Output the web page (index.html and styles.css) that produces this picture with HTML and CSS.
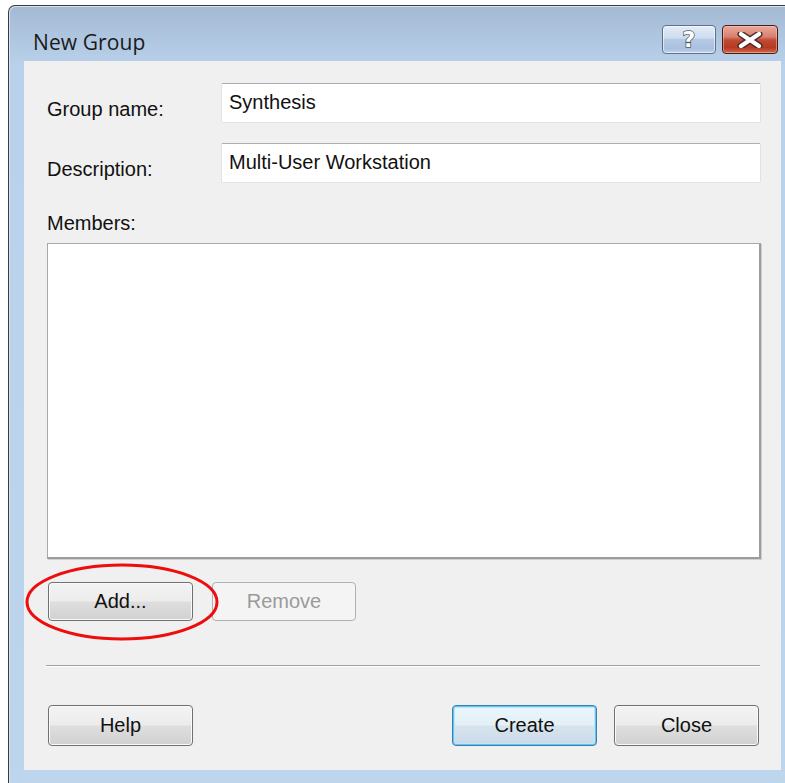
FILE: index.html
```html
<!DOCTYPE html>
<html lang="en">
<head>
<meta charset="utf-8">
<title>New Group</title>
<link rel="stylesheet" href="styles.css">
</head>
<body>
<div class="window">
  <div class="titlebar">
    <span class="title">New Group</span>
    <div class="caption-buttons">
      <div class="cap cap-help"><span class="qmark">?</span></div>
      <div class="cap cap-close">
        <svg width="26" height="16" viewBox="0 0 26 16">
          <path d="M4 2 L22 14 M22 2 L4 14" stroke="#4a2a26" stroke-width="7" stroke-linecap="round"/>
          <path d="M4 2 L22 14 M22 2 L4 14" stroke="#ffffff" stroke-width="4.2" stroke-linecap="round"/>
        </svg>
      </div>
    </div>
  </div>

  <div class="client">
    <div class="field-row">
      <span class="label">Group name:</span>
      <div class="textbox">Synthesis</div>
    </div>
    <div class="field-row second">
      <span class="label">Description:</span>
      <div class="textbox">Multi-User Workstation</div>
    </div>

    <div class="members-label">Members:</div>
    <div class="listbox"></div>

    <div class="member-actions">
      <button class="btn">Add...</button>
      <button class="btn disabled">Remove</button>
      <svg class="ring" width="196" height="80" viewBox="0 0 196 80">
        <ellipse cx="98" cy="39" rx="95" ry="37" fill="none" stroke="#ee0c0c" stroke-width="3"/>
      </svg>
    </div>

    <div class="separator"></div>

    <div class="footer">
      <button class="btn tall">Help</button>
      <div class="footer-right">
        <button class="btn tall default">Create</button>
        <button class="btn tall">Close</button>
      </div>
    </div>
  </div>
</div>
</body>
</html>
```

FILE: styles.css
```css
html, body {
  margin: 0;
  padding: 0;
  overflow: hidden;
  background: #ffffff;
}

body {
  width: 785px;
  height: 783px;
}

/* outer window frame (Aero Basic look) */
.window {
  margin: 5px 0 0 8px;
  width: 800px;
  height: 800px;
  box-sizing: border-box;
  border: 1px solid #3b3b3b;
  border-bottom: none;
  border-radius: 7px 7px 0 0;
  padding: 0 0 0 15px;
  background: linear-gradient(#a3b9d4 0px, #b4cbe5 45px, #b9d1ea 60px, #bdd4ed 760px, #c0d8f0 100%);
  box-shadow: inset 1px 1px 0 #d6e2f0;
}

.titlebar {
  width: 757px;
  height: 55px;
  display: flex;
  align-items: flex-start;
  justify-content: space-between;
}

.title {
  font-family: "Open Sans", "Noto Sans", sans-serif;
  font-size: 21px;
  color: #1a1a1a;
  margin: 22px 0 0 9px;
  line-height: 28px;
  letter-spacing: 0.1px;
}

.caption-buttons {
  display: flex;
  gap: 6px;
  margin: 19px 3px 0 0;
}

.cap {
  height: 27px;
  border-radius: 4px;
  display: flex;
  align-items: center;
  justify-content: center;
}

.cap-help {
  width: 52px;
  border: 1px solid #5f7189;
  background: linear-gradient(#e4edf8 0%, #cddcef 45%, #b4c9e4 50%, #a9c0df 85%, #c3d6ee 100%);
  box-shadow: inset 0 0 0 1px rgba(255, 255, 255, 0.55);
}

.qmark {
  font-family: "DejaVu Sans", sans-serif;
  font-weight: bold;
  font-size: 22px;
  line-height: 22px;
  color: #ffffff;
  -webkit-text-stroke: 1.5px #4e5864;
  paint-order: stroke fill;
  margin-top: 1px;
}

.cap-close {
  width: 54px;
  border: 1px solid #4a1c18;
  background: linear-gradient(#e9a99c 0%, #d9806f 40%, #c04a33 52%, #b53a22 80%, #cf6a4e 100%);
  box-shadow: inset 0 0 0 1px rgba(255, 210, 200, 0.45);
}

.cap-close svg {
  display: block;
}

/* dialog client area */
.client {
  width: 757px;
  height: 709px;
  box-sizing: border-box;
  background: #f0f0f0;
  padding: 22px 20px 0 23px;
  font-family: "Liberation Sans", Arial, sans-serif;
  font-size: 20px;
  color: #111111;
}

.field-row {
  display: flex;
  align-items: flex-start;
}

.field-row.second {
  margin-top: 20px;
}

.label {
  width: 174px;
  padding-top: 14px;
  line-height: 24px;
}

.textbox {
  width: 540px;
  height: 40px;
  box-sizing: border-box;
  background: #ffffff;
  border: 1px solid #dfe3e9;
  border-top-color: #abadb3;
  border-radius: 2px;
  padding: 6px 0 0 7px;
  line-height: 24px;
}

.members-label {
  margin-top: 28px;
  line-height: 24px;
}

.listbox {
  margin-top: 8px;
  width: 714px;
  height: 316px;
  box-sizing: border-box;
  background: #ffffff;
  border: 1px solid #a9a9a9;
  border-right: 2px solid #9c9c9c;
  border-bottom: 2px solid #9c9c9c;
  box-shadow: 1px 1px 0 #cfcfcf;
}

.member-actions {
  position: relative;
  display: flex;
  gap: 19px;
  margin-top: 23px;
  padding-left: 1px;
}

.btn {
  width: 145px;
  height: 39px;
  box-sizing: border-box;
  border: 1px solid #707070;
  border-radius: 4px;
  background: linear-gradient(#f3f3f3 0%, #ececec 48%, #dedede 52%, #d1d1d1 100%);
  box-shadow: inset 0 0 0 1px #fafafa;
  font-family: "Liberation Sans", Arial, sans-serif;
  font-size: 20px;
  color: #111111;
  padding: 0;
  margin: 0;
}

.btn.disabled {
  width: 144px;
  border-color: #adb2b5;
  background: #f4f4f4;
  box-shadow: none;
  color: #9a9a9a;
}

.btn.tall {
  height: 41px;
}

.btn.default {
  border-color: #3c7fb1;
  box-shadow: inset 0 0 0 1px #62c4f0, inset 0 0 0 2px #bfe6f8;
  background: linear-gradient(#eaf6fd 0%, #e4eff6 48%, #d6e4ee 52%, #c9dae7 100%);
}

/* hand-drawn highlight ring around the Add button */
.ring {
  position: absolute;
  left: -23px;
  top: -19px;
}

.separator {
  margin: 44px 0 0 -1px;
  width: 714px;
  height: 0;
  border-top: 1px solid #a0a0a0;
  border-bottom: 1px solid #ffffff;
}

.footer {
  display: flex;
  justify-content: space-between;
  margin-top: 38px;
  padding-left: 1px;
  width: 711px;
}

.footer-right {
  display: flex;
  gap: 17px;
}

.footer-right .btn {
  width: 145px;
}
```
